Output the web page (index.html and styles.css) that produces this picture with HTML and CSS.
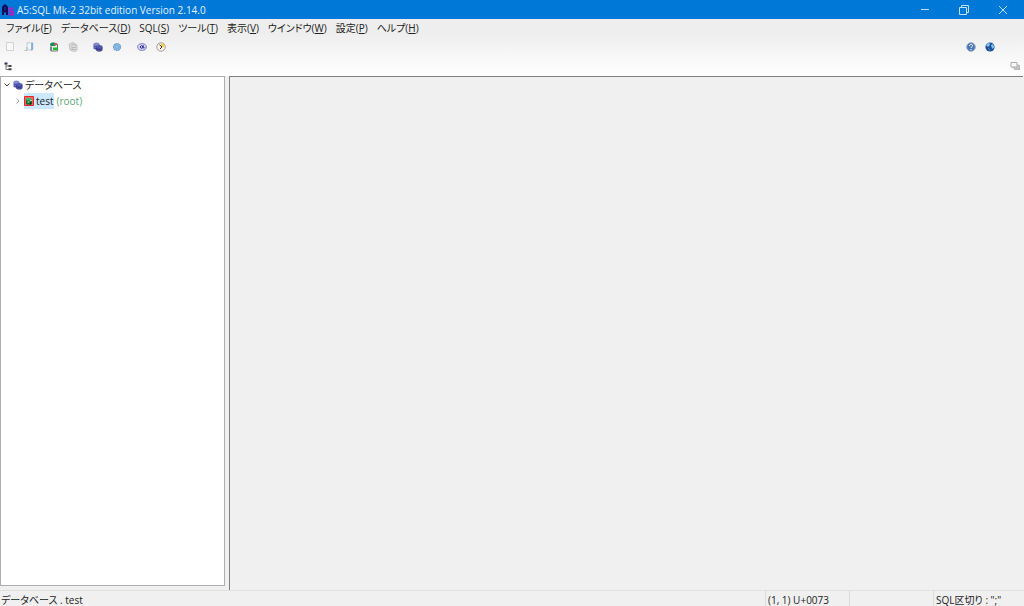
FILE: index.html
```html
<!DOCTYPE html>
<html lang="ja">
<head>
  <meta charset="UTF-8" />
  <meta name="viewport" content="width=device-width, initial-scale=1.0"/>
  <title>A5:SQL Mk-2</title>
  <link rel="stylesheet" href="styles.css">
</head>
<body>

  <svg class="defs" aria-hidden="true">
    <symbol id="db" viewBox="0 0 10 10">
      <path d="M.5 2.500v4c1 1.500 4.500 1.500 6 0v-4z" fill="#4a52a8"/>
      <ellipse cx="3.500" cy="2.300" rx="3" ry="1.700" fill="#8188cc"/>
      <path d="M3 5v3c1 2 5.500 2 6.500 0V5z" fill="#2c2f7c"/>
      <ellipse cx="6.300" cy="4.900" rx="3.200" ry="1.800" fill="#5058b0"/>
      <path d="M3.300 7.300c1 1.300 4.800 1.300 6 0M.7 4.500c.6.600 1.300.9 2.300 1" fill="none" stroke="#7f88cc" stroke-width=".6"/>
    </symbol>
  </svg>

  <header class="titlebar">
    <svg class="logo" viewBox="0 0 13 13">
      <path d="M1 12V4l2-2.500h2L7 4v8H5V9.500H3V12z" fill="#120c58"/>
      <path d="M3.500 4h1v3h-1z" fill="#243fae"/>
      <path d="M12.500 5.500H9v3h3v3H7.800" fill="none" stroke="#b51cc4" stroke-width="1.800"/>
    </svg>
    <h1>A5:SQL Mk-2 32bit edition Version 2.14.0</h1>
    <div class="window-buttons">
      <button aria-label="最小化"><svg viewBox="0 0 10 10"><path d="M1 4.500h8"/></svg></button>
      <button aria-label="元に戻す"><svg viewBox="0 0 10 10"><path d="M.5 2.500h7v7h-7zM2.500 2.500v-2h7v7h-2"/></svg></button>
      <button aria-label="閉じる"><svg viewBox="0 0 10 10"><path d="M1 1l8 8M9 1l-8 8"/></svg></button>
    </div>
  </header>

  <div class="tools">
    <nav class="menu">
      <button>ファイル(<u>F</u>)</button>
      <button>データベース(<u>D</u>)</button>
      <button>SQL(<u>S</u>)</button>
      <button>ツール(<u>T</u>)</button>
      <button>表示(<u>V</u>)</button>
      <button>ウインドウ(<u>W</u>)</button>
      <button>設定(<u>P</u>)</button>
      <button>ヘルプ(<u>H</u>)</button>
    </nav>

    <div class="toolbar">
      <div class="group">
        <button aria-label="新規"><svg viewBox="0 0 10 10"><path d="M1.500.5h7v8h-7z" fill="#f8f8f8" stroke="#d2d2d2"/></svg></button>
        <button aria-label="開く"><svg viewBox="0 0 10 10"><path d="M3 .8h4.500v7H3z" fill="#f2f6fa" stroke="#b9c2cc" stroke-width=".8"/><path d="M7.200 1l2-.5v7L7.200 9z" fill="#86aedb"/><path d="M.5 8.500H3V5" fill="none" stroke="#b4b9c0"/></svg></button>
      </div>
      <div class="group">
        <button aria-label="データベースに接続"><svg viewBox="0 0 10 10"><path d="M2 2.500h6.500V9H2z" fill="#e9f5e4" stroke="#4d5a50" stroke-width=".8"/><path d="M.8 2l2-1.500h3L7.500 2 6 4H2z" fill="#178b62"/><path d="M5 1.200h3.200v1.900H5z" fill="#c75b49"/><path d="M4 5.500h4.500V8H4z" fill="#1ec02c"/><path d="M1.500 5h1v3.500h-1z" fill="#3c4a80"/></svg></button>
        <button aria-label="切断" disabled><svg viewBox="0 0 10 10"><path d="M1 2l4-1.500L9 3v5.500L6 9.500 2 8z" fill="#dcdcdc" stroke="#bdbdbd" stroke-width=".8"/><path d="M3 4l2-2 3 2M4 5.500h4M4 7.500h4M4 4.500v4" fill="none" stroke="#b2b2b2" stroke-width=".8"/></svg></button>
      </div>
      <div class="group">
        <button aria-label="データベース"><svg><use href="#db"/></svg></button>
        <button aria-label="オプション"><svg viewBox="0 0 10 10"><circle cx="5" cy="5" r="3.500" fill="#8dbbe2" stroke="#6b9fd2" stroke-width="1.200" stroke-dasharray="1.900 .5"/><circle cx="5" cy="5" r="1.400" fill="#b4d4ef" stroke="#5a92c8" stroke-width=".7"/></svg></button>
      </div>
      <div class="group">
        <button aria-label="メール"><svg viewBox="0 0 10 10"><ellipse cx="5" cy="5" rx="4.300" ry="3.300" fill="#dcdcf8" stroke="#7a78c4"/><circle cx="4.600" cy="5" r="1.300" fill="none" stroke="#26248c"/><path d="M6.300 3.200v2.600q1 1 1.600-.4" fill="none" stroke="#26248c" stroke-width=".9"/></svg></button>
        <button aria-label="履歴"><svg viewBox="0 0 10 10"><circle cx="5" cy="5" r="4.200" fill="#f8f5e0" stroke="#a592ab"/><path d="M5 1.200A3.800 3.800 0 0 1 8.800 5L5 5z" fill="#efd34c"/><path d="M3.500 2.800L6 5 4 7" fill="none" stroke="#2d2833"/></svg></button>
      </div>
      <div class="group help">
        <button aria-label="ヘルプ"><svg viewBox="0 0 10 10"><circle cx="5" cy="5" r="4.300" fill="#4c77b5" stroke="#93aacb"/><path d="M3.500 4c0-2 3-2 3-.3C6.500 5 5 4.800 5 6M5 7v1" fill="none" stroke="#fff"/></svg></button>
        <button aria-label="ウェブサイト"><svg viewBox="0 0 10 10"><circle cx="5" cy="5" r="4.600" fill="#1e5399"/><path d="M1 3l2-2 2 .5-.5 2L3 5zM6 3l2-1 1.300 3-1.800 2-1-2z" fill="#82c3ee"/><path d="M3 6l2 1-.5 2z" fill="#4a91d3"/></svg></button>
      </div>
    </div>

    <div class="window-row">
      <button aria-label="ツリー表示"><svg viewBox="0 0 10 10"><path d="M3 2v6.500h3M3 5h3" fill="none" stroke="#777"/><path d="M1.500 1.500h3v2h-3z" fill="#34345f"/><path d="M5.500 4h3v2h-3zM5.500 7.200h3v2h-3z" fill="#444"/></svg></button>
      <button aria-label="ウインドウ一覧"><svg viewBox="0 0 10 10"><path d="M4 4h6v5H4z" fill="#b9b9b9"/><path d="M2.500 3h6v4.500h-6z" fill="#ccc"/><path d="M1 1.500h6v4.500H1z" fill="#fafafa" stroke="#aaa"/></svg></button>
    </div>
  </div>

  <main class="workspace">
    <aside class="tree">
      <div class="node">
        <svg class="arrow open" viewBox="0 0 6 6"><path d="M.5 1.500L3 4l2.500-2.500"/></svg>
        <svg><use href="#db"/></svg>
        <span>データベース</span>
      </div>
      <div class="node child">
        <svg class="arrow" viewBox="0 0 6 6"><path d="M1.500.5L4 3 1.500 5.500"/></svg>
        <span class="selected">
          <svg viewBox="0 0 10 10"><path d="M.5.500h9v9h-9z" fill="#f4655c" stroke="#e0282c"/><path d="M2 3.500c0-1 6-1 6 0V8c0 1-6 1-6 0z" fill="#126839"/><path d="M2.500 2h3l2.500 1-2 1.500H2.500z" fill="#37bd76"/><path d="M3.500 6h2M6 5l2-1" stroke="#e5f2a0"/><path d="M6.500 6v2.500" stroke="#151c18"/></svg>
          test
        </span>
        <span class="user">(root)</span>
      </div>
    </aside>
    <section class="mdi"></section>
  </main>

  <footer class="statusbar">
    <div class="path">データベース . test</div>
    <div class="cell">(1, 1) U+0073</div>
    <div class="cell"></div>
    <div class="cell delimiter">SQL区切り : ";"</div>
  </footer>

</body>
</html>
```
FILE: styles.css
```css
* {
  box-sizing: border-box;
}

body {
  display: flex;
  flex-direction: column;
  height: 100vh;
  margin: 0;
  background: #f0f0f0;
  color: #222;
  font-family: "Open Sans", "Noto Sans CJK JP", sans-serif;
  font-size: 10px;
  line-height: 16px;
  font-feature-settings: "palt";
  white-space: nowrap;
  overflow: hidden;
}

button {
  padding: 0;
  border: none;
  background: none;
  color: inherit;
  font: inherit;
  font-feature-settings: inherit;
}

svg {
  display: block;
  width: 10px;
  height: 10px;
}

.defs {
  position: absolute;
  width: 0;
  height: 0;
}

.titlebar {
  display: flex;
  align-items: center;
  height: 19px;
  padding: 0 2px 0 1px;
  background: #0078d7;
  color: #e4f1fc;
}

.logo {
  width: 13px;
  height: 13px;
}

h1 {
  margin: 0 0 0 3px;
  font-size: 10px;
  font-weight: normal;
}

.window-buttons {
  display: flex;
  margin-left: auto;
}

.window-buttons button {
  display: flex;
  justify-content: center;
  width: 39px;
}

.window-buttons path {
  fill: none;
  stroke: #c3e0f7;
}

.tools {
  height: 57px;
  background: linear-gradient(#eee 25%, #fff);
}

.menu {
  display: flex;
  gap: 9px;
  height: 18px;
  padding-left: 6px;
}

.toolbar {
  display: flex;
  align-items: center;
  gap: 15px;
  height: 19px;
  padding: 0 29px 0 5px;
}

.group {
  display: flex;
  gap: 9px;
}

.help {
  margin-left: auto;
}

.window-row {
  display: flex;
  align-items: center;
  justify-content: space-between;
  height: 20px;
  padding: 0 4px 0 3px;
}

.workspace {
  display: flex;
  flex: 1;
  gap: 4px;
  padding-right: 1px;
}

.tree {
  width: 22%;
  margin-bottom: 4px;
  border: 1px solid #abadb3;
  background: #fff;
}

.node {
  display: flex;
  align-items: center;
  gap: 2px;
  height: 16px;
  padding-left: 3px;
}

.child {
  gap: 3px;
  padding-left: 14px;
}

.arrow {
  width: 6px;
  height: 6px;
  margin-right: 1px;
}

.child .arrow {
  margin-right: 0;
}

.arrow path {
  fill: none;
  stroke: #a0a0a0;
}

.open path {
  stroke: #404040;
}

.selected {
  display: flex;
  align-items: center;
  gap: 2px;
  background: #cce8ff;
}

.user {
  color: #5aa873;
}

.mdi {
  flex: 1;
  border-top: 1px solid #808080;
  border-left: 1px solid #808080;
}

.statusbar {
  display: flex;
  height: 16px;
  border-top: 1px solid #e0e0e0;
}

.path {
  flex: 1;
  padding: 1px 0 0 1px;
}

.cell {
  width: 84px;
  padding: 1px 0 0 2px;
  border-left: 1px solid #dcdcdc;
}

.delimiter {
  width: 91px;
}
```
